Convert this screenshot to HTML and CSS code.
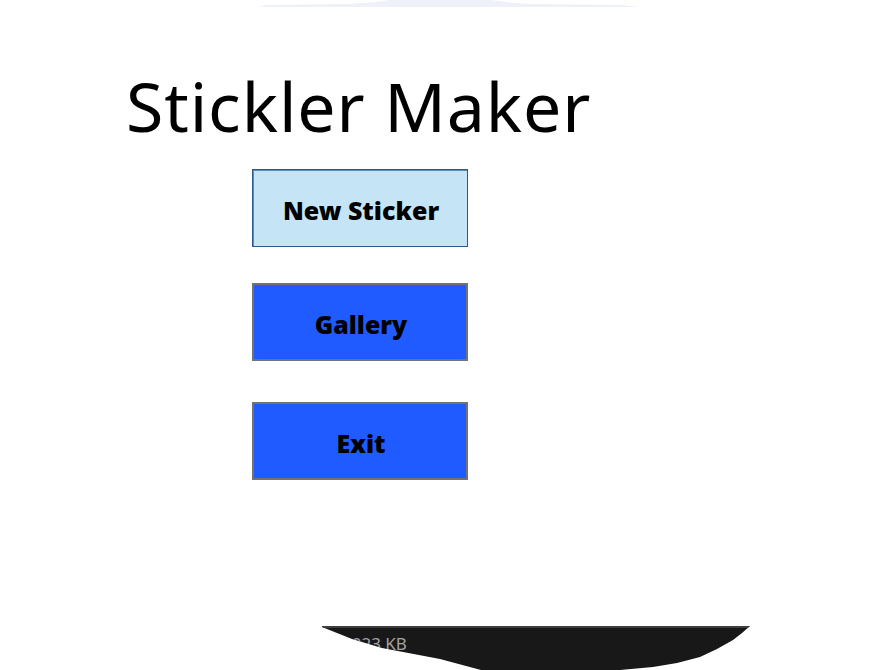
FILE: index.html
```html
<!DOCTYPE html>
<html lang="en">
<head>
<meta charset="utf-8">
<title>Stickler Maker</title>
<link rel="stylesheet" href="styles.css">
</head>
<body>
<div class="window">
  <div class="top-strip"></div>
  <main class="main">
    <h1 class="title">Stickler Maker</h1>
    <div class="menu">
      <button class="btn btn-primary">New Sticker</button>
      <button class="btn btn-blue btn-gallery">Gallery</button>
      <button class="btn btn-blue btn-exit">Exit</button>
    </div>
  </main>
  <footer class="status">
    <span class="status-text">1023 KB</span>
  </footer>
</div>
</body>
</html>
```

FILE: styles.css
```css
html, body {
  margin: 0;
  padding: 0;
  background: #ffffff;
}

.window {
  width: 878px;
  height: 670px;
  display: flex;
  flex-direction: column;
  overflow: hidden;
  background: #ffffff;
}

.top-strip {
  flex: 0 0 7px;
  width: 381px;
  margin-left: 259px;
  background: #eef1f8;
  clip-path: polygon(0 7px, 6px 5px, 89px 4px, 102px 3px, 118px 2px, 130px 0, 231px 0, 248px 2px, 254px 3px, 273px 4px, 363px 5px, 381px 7px);
}

.main {
  flex: 1;
  display: flex;
  flex-direction: column;
}

.title {
  margin: 65px 0 0 126px;
  font-family: "Noto Sans", "Open Sans", sans-serif;
  font-weight: 400;
  font-size: 68px;
  line-height: 68px;
  letter-spacing: 0.9px;
  color: #000000;
  white-space: nowrap;
}

.menu {
  display: flex;
  flex-direction: column;
  margin: 29px 0 0 252px;
}

.btn {
  box-sizing: border-box;
  width: 216px;
  height: 78px;
  padding: 3px 0 0 2px;
  display: flex;
  align-items: center;
  justify-content: center;
  font-family: "Noto Sans", "Open Sans", sans-serif;
  font-weight: 900;
  font-size: 25px;
  letter-spacing: 0;
  font-variant-ligatures: none;
  color: #000000;
  cursor: pointer;
}

.btn-primary {
  background: #c5e4f6;
  border: 1px solid #2c5b88;
  box-shadow: inset 1px 1px 0 #5d8cb6;
}

.btn-blue {
  background: #1f5bff;
  border: 2px solid #737373;
}

.btn-gallery {
  margin-top: 36px;
}

.btn-exit {
  margin-top: 41px;
}

.status {
  flex: 0 0 44px;
  box-sizing: border-box;
  width: 428px;
  margin-left: 322px;
  background: #181818;
  border-top: 2px solid #3e3e3e;
  padding: 6px 0 0 20px;
  clip-path: polygon(0 0, 428px 0, 420px 7px, 411px 14px, 395px 23px, 378px 31px, 355px 37px, 331px 41px, 298px 44px, 159px 44px, 118px 33px, 60px 22px, 30px 13px, 0 1px);
}

.status-text {
  font-family: "Noto Sans", "Open Sans", sans-serif;
  font-size: 17px;
  line-height: 20px;
  color: #a3a3a3;
}
```
